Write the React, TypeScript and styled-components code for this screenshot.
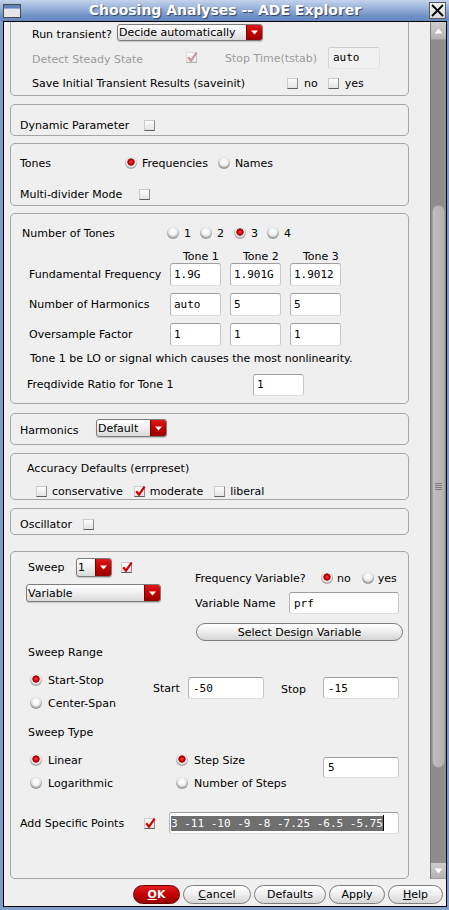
import React from "react";
import styled, { createGlobalStyle } from "styled-components";

const GlobalStyle = createGlobalStyle`
  html, body { margin: 0; padding: 0; background: #efefef; }
  body {
    font-family: "DejaVu Sans", "Liberation Sans", sans-serif;
    font-size: 11px;
    line-height: 13px;
    color: #000;
  }
  * { box-sizing: border-box; }
`;

const Window = styled.div`
  width: 449px;
  height: 910px;
  display: flex;
  flex-direction: column;
  background: #7f9dcb;
  overflow: hidden;
`;

const TitleBar = styled.div`
  height: 21px;
  flex: none;
  display: flex;
  align-items: center;
  padding: 0 3px 0 3px;
  background: linear-gradient(#c3d3ea 0%, #98b2da 40%, #7292c6 75%, #6487bf 100%);
`;

const TitleText = styled.div`
  flex: 1;
  text-align: center;
  color: #fff;
  font-family: "DejaVu Sans", sans-serif;
  font-weight: bold;
  font-size: 14px;
  line-height: 17px;
  text-shadow: 1px 1px 1px rgba(20, 40, 80, 0.75);
`;

const IconBox = styled.svg`
  width: 18px;
  height: 14px;
  flex: none;
`;

const CloseBox = styled.div`
  width: 17px;
  height: 17px;
  flex: none;
  border: 1px solid #5a5a5a;
  background: linear-gradient(#f4f4f4, #d8d8d8);
  display: flex;
  align-items: center;
  justify-content: center;
`;

const Client = styled.div`
  flex: 1;
  margin: 0 2px 3px 3px;
  border: 1px solid #000;
  background: #efefef;
  display: flex;
  flex-direction: column;
  min-height: 0;
`;

const Body = styled.div`
  height: 857px;
  flex: none;
  display: flex;
`;

const Content = styled.div`
  flex: 1;
  overflow: hidden;
  padding-left: 6px;
  display: flex;
  flex-direction: column;
`;

const Section = styled.div<{ $mt: number; $pt: number; $pb?: number; $h?: number }>`
  width: 399px;
  flex: none;
  margin-top: ${(p) => p.$mt}px;
  padding-top: ${(p) => p.$pt}px;
  padding-bottom: ${(p) => p.$pb ?? 0}px;
  ${(p) => (p.$h ? `height: ${p.$h}px;` : "")}
  border: 1px solid #a6a6a6;
  border-radius: 5px;
  display: flex;
  flex-direction: column;
`;

const Row = styled.div<{ $h: number; $mt?: number; $pl?: number; $end?: boolean }>`
  height: ${(p) => p.$h}px;
  margin-top: ${(p) => p.$mt ?? 0}px;
  padding-left: ${(p) => p.$pl ?? 0}px;
  display: flex;
  align-items: ${(p) => (p.$end ? "flex-end" : "center")};
  flex: none;
`;

const Label = styled.span<{ $w?: number; $ml?: number; $dim?: boolean; $dy?: number }>`
  ${(p) => (p.$w ? `width: ${p.$w}px;` : "")}
  margin-left: ${(p) => p.$ml ?? 0}px;
  padding-top: ${(p) => p.$dy ?? 0}px;
  flex: none;
  white-space: nowrap;
  color: ${(p) => (p.$dim ? "#9b9b9b" : "#000")};
`;

const ToneHead = styled.span`
  width: 51px;
  flex: none;
  padding-left: 13px;
  white-space: nowrap;
`;

const Fields = styled.div`
  display: flex;
  gap: 9px;
`;

/* ---------- check box ---------- */
const BoxWrap = styled.span<{ $dim?: boolean; $ml?: number }>`
  position: relative;
  width: 11px;
  height: 11px;
  flex: none;
  margin-left: ${(p) => p.$ml ?? 0}px;
  border: 1px solid;
  border-color: ${(p) => (p.$dim ? "#dcdcdc #c4c4c4 #b4b4b4 #dcdcdc" : "#cdcdcd #8c8c8c #5e5e5e #cdcdcd")};
  background: linear-gradient(#fdfdfd, #e4e4e4);
`;

const Tick = styled.svg`
  position: absolute;
  left: -1px;
  top: -2px;
  width: 12px;
  height: 12px;
`;

const CheckBox: React.FC<{ checked?: boolean; dim?: boolean; ml?: number }> = ({ checked, dim, ml }) => (
  <BoxWrap $dim={dim} $ml={ml}>
    {checked && (
      <Tick viewBox="0 0 12 12">
        <path d="M2.2 6.2 L5 9.6 L10.6 1.6" fill="none" stroke={dim ? "#c79b9b" : "#d00000"} strokeWidth="2.2" />
      </Tick>
    )}
  </BoxWrap>
);

/* ---------- radio ---------- */
const RadioDot = styled.span<{ $on?: boolean }>`
  width: 12px;
  height: 12px;
  flex: none;
  border-radius: 50%;
  background: ${(p) =>
    p.$on
      ? "radial-gradient(circle at 50% 42%, #ff4a4a 0, #d40000 2px, #9a0000 3.3px, #f6f6f6 4px, #e2e2e2 4.8px, #a9a9a9 6px)"
      : "radial-gradient(circle at 50% 38%, #ffffff 0, #f6f6f6 3px, #dedede 4.6px, #9c9c9c 6.4px)"};
`;

const Opt = styled.span<{ $gap?: number; $ml?: number; $w?: number }>`
  display: inline-flex;
  align-items: center;
  flex: none;
  gap: ${(p) => p.$gap ?? 6}px;
  margin-left: ${(p) => p.$ml ?? 0}px;
  ${(p) => (p.$w ? `width: ${p.$w}px;` : "")}
  white-space: nowrap;
`;

/* ---------- drop down ---------- */
const Drop = styled.div<{ $w: number; $h: number; $ml?: number; $mt?: number }>`
  width: ${(p) => p.$w}px;
  height: ${(p) => p.$h}px;
  margin-left: ${(p) => p.$ml ?? 0}px;
  margin-top: ${(p) => p.$mt ?? 0}px;
  flex: none;
  display: flex;
  border: 1px solid #7c7c7c;
  border-radius: 3px;
  overflow: hidden;
  background: linear-gradient(#ffffff 0%, #f1f1f1 45%, #d9d9d9 100%);
  box-shadow: 0 1px 1px rgba(0, 0, 0, 0.18);
`;

const DropText = styled.span`
  flex: 1;
  padding-left: 1px;
  display: flex;
  align-items: center;
  white-space: nowrap;
  overflow: hidden;
`;

const DropArrow = styled.span`
  width: 16px;
  flex: none;
  display: flex;
  align-items: center;
  justify-content: center;
  background: linear-gradient(#dc1a1a 0%, #c20000 50%, #960000 100%);
  border-left: 1px solid #7a0000;
`;

const ArrowSvg = styled.svg`
  width: 7px;
  height: 5px;
`;

const Dropdown: React.FC<{ w: number; h: number; text: string; ml?: number; mt?: number }> = ({ w, h, text, ml, mt }) => (
  <Drop $w={w} $h={h} $ml={ml} $mt={mt}>
    <DropText>{text}</DropText>
    <DropArrow>
      <ArrowSvg viewBox="0 0 7 5">
        <path d="M0 0.5 H7 L3.5 4.5 Z" fill="#fff" />
      </ArrowSvg>
    </DropArrow>
  </Drop>
);

/* ---------- text field ---------- */
const Field = styled.div<{ $w: number; $h: number; $ml?: number; $mt?: number; $dim?: boolean; $pl?: number }>`
  width: ${(p) => p.$w}px;
  height: ${(p) => p.$h}px;
  margin-left: ${(p) => p.$ml ?? 0}px;
  margin-top: ${(p) => p.$mt ?? 0}px;
  padding-left: ${(p) => p.$pl ?? 3}px;
  flex: none;
  display: flex;
  align-items: center;
  background: ${(p) => (p.$dim ? "#f1f1f1" : "#ffffff")};
  border: 1px solid;
  border-color: ${(p) => (p.$dim ? "#cfcfcf #e0e0e0 #e6e6e6 #d4d4d4" : "#9d9d9d #cacaca #dedede #b4b4b4")};
  border-radius: 3px;
  font-family: "DejaVu Sans Mono", "Liberation Mono", monospace;
  font-size: 11px;
  white-space: nowrap;
  overflow: hidden;
`;

const Selected = styled.span`
  background: #6f6f6f;
  color: #fff;
  line-height: 15px;
  height: 15px;
`;

const Caret = styled.span`
  width: 1px;
  height: 16px;
  background: #000;
  flex: none;
`;

/* ---------- buttons ---------- */
const Pill = styled.button<{ $w: number; $primary?: boolean; $ml?: number; $mt?: number; $h?: number }>`
  width: ${(p) => p.$w}px;
  height: ${(p) => p.$h ?? 19}px;
  margin-left: ${(p) => p.$ml ?? 0}px;
  margin-top: ${(p) => p.$mt ?? 0}px;
  flex: none;
  padding: 0;
  border-radius: 10px;
  border: 1px solid ${(p) => (p.$primary ? "#6a0000" : "#7e7e7e")};
  background: ${(p) =>
    p.$primary
      ? "linear-gradient(#e21c1c 0%, #c40000 50%, #960000 100%)"
      : "linear-gradient(#ffffff 0%, #f0f0f0 45%, #d5d5d5 100%)"};
  color: ${(p) => (p.$primary ? "#fff" : "#000")};
  font-family: "DejaVu Sans", sans-serif;
  font-size: 11px;
  font-weight: ${(p) => (p.$primary ? "bold" : "normal")};
  line-height: 13px;
`;

const U = styled.span`
  text-decoration: underline;
`;

const ButtonBar = styled.div`
  flex: 1;
  display: flex;
  justify-content: flex-end;
  align-items: flex-start;
  gap: 3px;
  padding: 6px 3px 0 0;
`;

/* ---------- S8 layout ---------- */
const TopArea = styled.div`
  display: flex;
  align-items: flex-start;
  flex: none;
`;

const Col = styled.div<{ $w?: number; $mt?: number; $pl?: number; $gap?: number }>`
  ${(p) => (p.$w ? `width: ${p.$w}px;` : "")}
  margin-top: ${(p) => p.$mt ?? 0}px;
  padding-left: ${(p) => p.$pl ?? 0}px;
  display: flex;
  flex-direction: column;
  align-items: flex-start;
  gap: ${(p) => p.$gap ?? 0}px;
  flex: none;
`;

const Block = styled.div<{ $mt: number }>`
  display: flex;
  align-items: flex-start;
  margin-top: ${(p) => p.$mt}px;
  flex: none;
`;

/* ---------- scrollbar ---------- */
const Scroll = styled.div`
  width: 16px;
  flex: none;
  display: flex;
  flex-direction: column;
  background: #8d8d8d;
  border-left: 1px solid #7a7a7a;
`;

const ScrollBtn = styled.div<{ $h: number }>`
  height: ${(p) => p.$h}px;
  flex: none;
  display: flex;
  align-items: center;
  justify-content: center;
  background: linear-gradient(#cdcdcd, #b3b3b3);
  border-bottom: 1px solid #9c9c9c;
`;

const Track = styled.div`
  flex: 1;
  padding-top: 165px;
  display: flex;
  flex-direction: column;
`;

const Thumb = styled.div`
  height: 563px;
  margin: 0 1px;
  border-radius: 7px;
  border: 1px solid #9f9f9f;
  background: linear-gradient(90deg, #bebebe, #b3b3b3);
  display: flex;
  align-items: center;
  justify-content: center;
`;

const Grip = styled.div`
  width: 7px;
  height: 7px;
  background: repeating-linear-gradient(#7d7d7d 0 1px, transparent 1px 2px);
`;

const TriSvg = styled.svg`
  width: 9px;
  height: 6px;
`;

export default function App() {
  return (
    <>
      <GlobalStyle />
      <Window>
        <TitleBar>
          <IconBox viewBox="0 0 18 14">
            <rect x="0.5" y="0.5" width="17" height="13" fill="#e6e6e6" stroke="#4a4a4a" />
            <rect x="1" y="1" width="16" height="3" fill="#5f83bb" />
            <rect x="1" y="4" width="16" height="1" fill="#9ab0d2" />
          </IconBox>
          <TitleText>Choosing Analyses -- ADE Explorer</TitleText>
          <CloseBox>
            <svg width="13" height="13" viewBox="0 0 13 13">
              <path d="M1 1 L12 12 M12 1 L1 12" stroke="#000" strokeWidth="1.8" />
            </svg>
          </CloseBox>
        </TitleBar>

        <Client>
          <Body>
            <Content>
              {/* Section 1: transient */}
              <Section $mt={-12} $pt={13} $pb={4}>
                <Row $h={17} $pl={21} $end>
                  <Label $w={85}>Run transient?</Label>
                  <Dropdown w={146} h={17} text="Decide automatically" />
                </Row>
                <Row $h={23} $mt={5} $pl={21}>
                  <Label $w={154} $dim $dy={3}>Detect Steady State</Label>
                  <CheckBox checked dim />
                  <Label $w={103} $ml={28} $dim $dy={1}>Stop Time(tstab)</Label>
                  <Field $w={52} $h={22} $dim $pl={4}>auto</Field>
                </Row>
                <Row $h={16} $mt={6} $pl={21}>
                  <Label $w={255}>Save Initial Transient Results (saveinit)</Label>
                  <Opt $gap={6}>
                    <CheckBox />
                    no
                  </Opt>
                  <Opt $gap={6} $ml={10}>
                    <CheckBox />
                    yes
                  </Opt>
                </Row>
              </Section>

              {/* Section 2 */}
              <Section $mt={8} $pt={12} $pb={2}>
                <Row $h={16} $pl={9}>
                  <Label $w={124}>Dynamic Parameter</Label>
                  <CheckBox />
                </Row>
              </Section>

              {/* Section 3 */}
              <Section $mt={7} $pt={11} $pb={3}>
                <Row $h={16} $pl={9}>
                  <Label $w={105}>Tones</Label>
                  <Opt $gap={5}>
                    <RadioDot $on />
                    Frequencies
                  </Opt>
                  <Opt $gap={5} $ml={10}>
                    <RadioDot />
                    Names
                  </Opt>
                </Row>
                <Row $h={16} $mt={15} $pl={9}>
                  <Label $w={119}>Multi-divider Mode</Label>
                  <CheckBox />
                </Row>
              </Section>

              {/* Section 4: tones */}
              <Section $mt={7} $pt={11} $pb={7}>
                <Row $h={16} $pl={11}>
                  <Label $w={145}>Number of Tones</Label>
                  <Opt $gap={5} $w={33}>
                    <RadioDot />1
                  </Opt>
                  <Opt $gap={5} $w={34}>
                    <RadioDot />2
                  </Opt>
                  <Opt $gap={5} $w={33}>
                    <RadioDot $on />3
                  </Opt>
                  <Opt $gap={5}>
                    <RadioDot />4
                  </Opt>
                </Row>
                <Row $h={13} $mt={9} $pl={18}>
                  <Label $w={141} />
                  <Fields>
                    <ToneHead>Tone 1</ToneHead>
                    <ToneHead>Tone 2</ToneHead>
                    <ToneHead>Tone 3</ToneHead>
                  </Fields>
                </Row>
                <Row $h={23} $pl={18}>
                  <Label $w={141}>Fundamental Frequency</Label>
                  <Fields>
                    <Field $w={51} $h={23}>1.9G</Field>
                    <Field $w={51} $h={23}>1.901G</Field>
                    <Field $w={51} $h={23}>1.9012</Field>
                  </Fields>
                </Row>
                <Row $h={23} $mt={7} $pl={18}>
                  <Label $w={141}>Number of Harmonics</Label>
                  <Fields>
                    <Field $w={51} $h={23}>auto</Field>
                    <Field $w={51} $h={23}>5</Field>
                    <Field $w={51} $h={23}>5</Field>
                  </Fields>
                </Row>
                <Row $h={23} $mt={7} $pl={18}>
                  <Label $w={141}>Oversample Factor</Label>
                  <Fields>
                    <Field $w={51} $h={23}>1</Field>
                    <Field $w={51} $h={23}>1</Field>
                    <Field $w={51} $h={23}>1</Field>
                  </Fields>
                </Row>
                <Row $h={13} $mt={6} $pl={19}>
                  <Label>Tone 1 be LO or signal which causes the most nonlinearity.</Label>
                </Row>
                <Row $h={23} $mt={8} $pl={16}>
                  <Label $w={226}>Freqdivide Ratio for Tone 1</Label>
                  <Field $w={51} $h={22}>1</Field>
                </Row>
              </Section>

              {/* Section 5 */}
              <Section $mt={9} $pt={5} $pb={7}>
                <Row $h={18} $pl={9} $end>
                  <Label $w={76} $dy={0}>Harmonics</Label>
                  <Dropdown w={71} h={18} text="Default" />
                </Row>
              </Section>

              {/* Section 6 */}
              <Section $mt={8} $pt={8} $pb={1}>
                <Row $h={13} $pl={16}>
                  <Label>Accuracy Defaults (errpreset)</Label>
                </Row>
                <Row $h={13} $mt={10} $pl={25}>
                  <Opt $gap={5}>
                    <CheckBox />
                    conservative
                  </Opt>
                  <Opt $gap={5} $ml={11}>
                    <CheckBox checked />
                    moderate
                  </Opt>
                  <Opt $gap={5} $ml={11}>
                    <CheckBox />
                    liberal
                  </Opt>
                </Row>
              </Section>

              {/* Section 7 */}
              <Section $mt={8} $pt={7} $pb={2}>
                <Row $h={16} $pl={9}>
                  <Label $w={63}>Oscillator</Label>
                  <CheckBox />
                </Row>
              </Section>

              {/* Section 8: sweep */}
              <Section $mt={16} $pt={6} $h={328}>
                <TopArea>
                  <Col $w={184}>
                    <Row $h={19} $pl={17}>
                      <Label $w={48}>Sweep</Label>
                      <Dropdown w={36} h={19} text="1" />
                      <CheckBox checked ml={9} />
                    </Row>
                    <Dropdown w={135} h={18} text="Variable" ml={15} mt={7} />
                  </Col>
                  <Col $mt={12}>
                    <Row $h={16}>
                      <Label $w={126}>Frequency Variable?</Label>
                      <Opt $gap={4}>
                        <RadioDot $on />
                        no
                      </Opt>
                      <Opt $gap={4} $ml={11}>
                        <RadioDot />
                        yes
                      </Opt>
                    </Row>
                    <Row $h={22} $mt={6}>
                      <Label $w={94}>Variable Name</Label>
                      <Field $w={110} $h={22} $pl={4}>prf</Field>
                    </Row>
                    <Pill $w={207} $h={18} $ml={1} $mt={9}>Select Design Variable</Pill>
                  </Col>
                </TopArea>

                <Row $h={13} $mt={5} $pl={17}>
                  <Label>Sweep Range</Label>
                </Row>
                <Block $mt={13}>
                  <Col $w={142} $pl={19} $gap={7}>
                    <Row $h={16}>
                      <Opt $gap={6}>
                        <RadioDot $on />
                        Start-Stop
                      </Opt>
                    </Row>
                    <Row $h={16}>
                      <Opt $gap={6}>
                        <RadioDot />
                        Center-Span
                      </Opt>
                    </Row>
                  </Col>
                  <Row $h={22} $mt={5}>
                    <Label $w={35}>Start</Label>
                    <Field $w={76} $h={22} $pl={4}>-50</Field>
                    <Label $w={42} $ml={17} $dy={2}>Stop</Label>
                    <Field $w={76} $h={22} $pl={4}>-15</Field>
                  </Row>
                </Block>

                <Row $h={13} $mt={15} $pl={17}>
                  <Label>Sweep Type</Label>
                </Row>
                <Block $mt={13}>
                  <Col $w={165} $pl={19} $gap={7}>
                    <Row $h={16}>
                      <Opt $gap={6}>
                        <RadioDot $on />
                        Linear
                      </Opt>
                    </Row>
                    <Row $h={16}>
                      <Opt $gap={6}>
                        <RadioDot />
                        Logarithmic
                      </Opt>
                    </Row>
                  </Col>
                  <Col $w={147} $gap={7}>
                    <Row $h={16}>
                      <Opt $gap={6}>
                        <RadioDot $on />
                        Step Size
                      </Opt>
                    </Row>
                    <Row $h={16}>
                      <Opt $gap={6}>
                        <RadioDot />
                        Number of Steps
                      </Opt>
                    </Row>
                  </Col>
                  <Field $w={76} $h={21} $mt={5} $pl={4}>5</Field>
                </Block>

                <Row $h={22} $mt={21} $pl={9}>
                  <Label $w={124}>Add Specific Points</Label>
                  <CheckBox checked />
                  <Field $w={230} $h={22} $ml={14} $pl={1}>
                    <Selected>3 -11 -10 -9 -8 -7.25 -6.5 -5.75</Selected>
                    <Caret />
                  </Field>
                </Row>
              </Section>
            </Content>

            <Scroll>
              <ScrollBtn $h={18}>
                <TriSvg viewBox="0 0 9 6">
                  <path d="M0.5 5.5 H8.5 L4.5 0.5 Z" fill="#fff" />
                </TriSvg>
              </ScrollBtn>
              <Track>
                <Thumb>
                  <Grip />
                </Thumb>
              </Track>
              <ScrollBtn $h={16}>
                <TriSvg viewBox="0 0 9 6">
                  <path d="M0.5 0.5 H8.5 L4.5 5.5 Z" fill="#fff" />
                </TriSvg>
              </ScrollBtn>
            </Scroll>
          </Body>

          <ButtonBar>
            <Pill $w={47} $primary>
              <U>O</U>K
            </Pill>
            <Pill $w={68}>
              <U>C</U>ancel
            </Pill>
            <Pill $w={72}>Defaults</Pill>
            <Pill $w={56}>Apply</Pill>
            <Pill $w={55}>
              <U>H</U>elp
            </Pill>
          </ButtonBar>
        </Client>
      </Window>
    </>
  );
}
